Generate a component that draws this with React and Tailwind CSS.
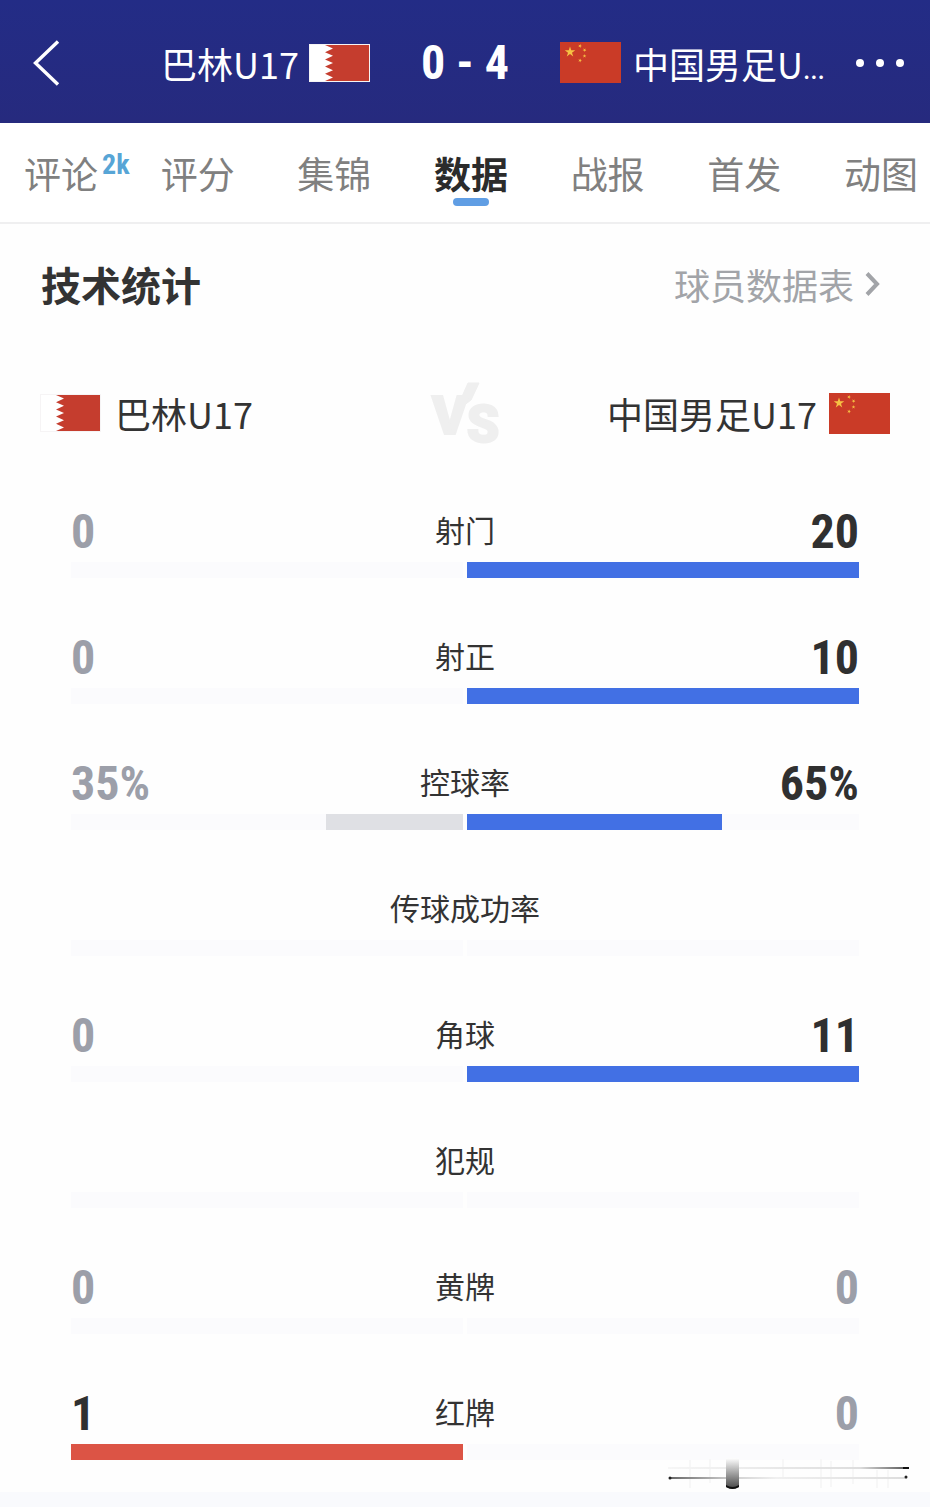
const NUM = "font-['Roboto_Condensed','Liberation_Sans_Narrow',Roboto,sans-serif] font-bold";

const tabs = [
  { label: "评论", badge: "2k" },
  { label: "评分" },
  { label: "集锦" },
  { label: "数据", active: true },
  { label: "战报" },
  { label: "首发" },
  { label: "动图" },
];

const stats = [
  { label: "射门", home: "0", away: "20", homePct: 0, awayPct: 100 },
  { label: "射正", home: "0", away: "10", homePct: 0, awayPct: 100 },
  { label: "控球率", home: "35%", away: "65%", homePct: 35, awayPct: 65 },
  { label: "传球成功率", home: "", away: "", homePct: 0, awayPct: 0 },
  { label: "角球", home: "0", away: "11", homePct: 0, awayPct: 100 },
  { label: "犯规", home: "", away: "", homePct: 0, awayPct: 0 },
  { label: "黄牌", home: "0", away: "0", homePct: 0, awayPct: 0 },
  { label: "红牌", home: "1", away: "0", homePct: 100, awayPct: 0, alert: true },
];

function BahrainFlag({ className }) {
  return (
    <svg viewBox="0 0 61 38" className={className} role="img" aria-label="巴林">
      <rect width="61" height="38" fill="#f6f4f5" />
      <rect x="1" y="1" width="59" height="36" fill="#fff" />
      <path
        d="M60 1H16l8 3.6-8 3.6 8 3.6-8 3.6 8 3.6-8 3.6 8 3.6-8 3.6 8 3.6-8 3.6H60z"
        fill="#c53d2e"
      />
    </svg>
  );
}

function Star({ x, y, r, rotate = 0 }) {
  return (
    <path
      transform={`translate(${x} ${y}) rotate(${rotate}) scale(${r})`}
      d="M0-1 .225-.31.951-.309.363.118.588.809 0 .382-.588.809-.363.118-.951-.309-.225-.31z"
      fill="#f6c244"
    />
  );
}

function ChinaFlag({ className }) {
  return (
    <svg viewBox="0 0 61 41" className={className} role="img" aria-label="中国">
      <rect width="61" height="41" fill="#ca3b27" />
      <Star x={10} y={10} r={5.5} />
      <Star x={20} y={4} r={2} rotate={20} />
      <Star x={24.5} y={8} r={2} rotate={40} />
      <Star x={24.5} y={14} r={2} />
      <Star x={20} y={18.5} r={2} rotate={20} />
    </svg>
  );
}

function Header() {
  return (
    <header className="grid h-[123px] grid-cols-[1fr_190px_1fr] items-center bg-linear-to-b from-[#232c86] to-[#262a7e] pt-0.5 text-white">
      <div className="flex items-center justify-between pl-8">
        <button type="button" aria-label="返回">
          <svg viewBox="0 0 28 46" className="h-[46px] w-7" fill="none" stroke="currentColor" strokeWidth="3.4">
            <path d="M26 1.5 3.5 23 26 44.5" />
          </svg>
        </button>
        <div className="flex items-center gap-2.5">
          <span className="text-[36px] leading-[48px]">巴林U17</span>
          <BahrainFlag className="h-[38px] w-[61px]" />
        </div>
      </div>
      <p className={`${NUM} text-center text-[48px] leading-[52px]`}>0 - 4</p>
      <div className="flex items-center justify-between pr-6">
        <div className="flex items-center gap-3">
          <ChinaFlag className="h-[41px] w-[61px]" />
          <span className="text-[36px] leading-[48px] whitespace-nowrap">
            中国男足U<span className="text-[26px] leading-none">...</span>
          </span>
        </div>
        <button type="button" aria-label="更多">
          <svg viewBox="0 0 52 10" className="h-2.5 w-[52px]" fill="currentColor">
            <circle cx="6" cy="5" r="4" />
            <circle cx="26" cy="5" r="4" />
            <circle cx="46" cy="5" r="4" />
          </svg>
        </button>
      </div>
    </header>
  );
}

function Tabs() {
  return (
    <nav className="flex h-[101px] justify-between border-b-2 border-[#efeff0] bg-white pt-6 pr-3 pl-6">
      {tabs.map((tab) => (
        <a
          key={tab.label}
          href="#"
          className={`relative flex flex-col items-center text-[37px] leading-[52px] ${
            tab.active ? "font-bold text-[#2b2b2b]" : "text-[#808080]"
          }`}
        >
          {tab.label}
          {tab.badge && (
            <sup className={`${NUM} absolute top-0 left-full ml-1 text-[28px] leading-9 text-[#57a5d6]`}>
              {tab.badge}
            </sup>
          )}
          {tab.active && <span className="absolute top-[51px] h-2 w-9 rounded-full bg-[#609ee4]" />}
        </a>
      ))}
    </nav>
  );
}

function VersusMark() {
  return (
    <svg
      viewBox="0 0 68 62"
      className="h-[62px] w-[68px] overflow-visible"
      fill="#efefef"
      stroke="#efefef"
      role="img"
      aria-label="VS"
    >
      <path d="M37 1H48L40 18 32 24 21 51H15z" />
      <text y="52" fontFamily="Roboto" fontWeight="900" strokeWidth="2">
        <tspan x="1" fontSize="54">V</tspan>
        <tspan dx="-1" dy="8" fontSize="52">S</tspan>
      </text>
    </svg>
  );
}

function StatRow({ stat }) {
  const tone = (mine, other) => (mine > other ? "text-[#303030]" : "text-[#9c9fa9]");
  return (
    <li className="flex flex-col gap-[5px]">
      <div className="grid h-[52px] grid-cols-[1fr_auto_1fr] items-start">
        <span className={`${NUM} text-[48px] leading-[54px] ${tone(stat.homePct, stat.awayPct)}`}>{stat.home}</span>
        <span className="text-[30px] leading-[48px] text-[#333]">{stat.label}</span>
        <span className={`${NUM} text-right text-[48px] leading-[54px] ${tone(stat.awayPct, stat.homePct)}`}>
          {stat.away}
        </span>
      </div>
      <div className="grid grid-cols-2 gap-1">
        <div className="flex h-4 justify-end bg-[#fbfbfd]">
          <div className={stat.alert ? "bg-[#dc5445]" : "bg-[#dfe0e4]"} style={{ width: `${stat.homePct}%` }} />
        </div>
        <div className="flex h-4 bg-[#fbfbfd]">
          <div className="bg-[#4270e4]" style={{ width: `${stat.awayPct}%` }} />
        </div>
      </div>
    </li>
  );
}

function ScrollMark() {
  return (
    <svg viewBox="0 0 242 32" className="absolute right-5 bottom-0.5 h-8 w-[242px]" aria-hidden="true">
      <defs>
        <linearGradient id="knob" x1="0" y1="0" x2="0" y2="1">
          <stop offset="0" stopColor="#fff" />
          <stop offset="0.5" stopColor="#a0a0a0" />
          <stop offset="1" stopColor="#444" />
        </linearGradient>
        <linearGradient id="upper" x1="0" x2="1">
          <stop offset="0" stopColor="#f6f6f6" />
          <stop offset="0.8" stopColor="#ddd" />
          <stop offset="1" stopColor="#555" />
        </linearGradient>
        <linearGradient id="lower" x1="0" x2="1">
          <stop offset="0" stopColor="#666" />
          <stop offset="0.25" stopColor="#ccc" />
          <stop offset="0.45" stopColor="#f0f0f0" />
          <stop offset="1" stopColor="#ddd" />
        </linearGradient>
      </defs>
      <path
        d="M22 2v28M42 1v24M115 1v20M153 1v29M163 3v26M185 2v24M209 12v18M220 12v18"
        stroke="#f7f7f7"
        strokeWidth="2"
      />
      <rect x="0" y="9" width="240" height="2" fill="url(#upper)" />
      <rect x="1" y="19" width="238" height="2" fill="url(#lower)" />
      <rect x="235" y="9" width="6" height="2" fill="#111" />
      <circle cx="2" cy="20" r="1.5" fill="#222" />
      <circle cx="238" cy="19" r="1.5" fill="#222" />
      <path d="M58 0H71V29Q64.500 33 58 29z" fill="url(#knob)" />
      <path d="M58 29Q64.500 33 71 29V27Q64.500 31 58 27z" fill="#111" />
    </svg>
  );
}

export default function App() {
  return (
    <div
      lang="zh-CN"
      className="min-h-screen overflow-x-hidden bg-[#f9fafd] font-['Noto_Sans_CJK_SC',sans-serif] text-[#333]"
    >
      <Header />
      <Tabs />
      <main className="relative bg-[#fefefe] pt-8 pb-8">
        <div className="flex items-center justify-between pr-[50px] pl-[41px]">
          <h1 className="text-[40px] leading-[56px] font-bold">技术统计</h1>
          <a href="#" className="flex items-center gap-2.5 text-[36px] leading-[56px] text-[#a2a4a8]">
            球员数据表
            <svg viewBox="0 0 16 26" className="h-[26px] w-4" fill="none" stroke="currentColor" strokeWidth="4">
              <path d="M3 2.500 13 13 3 23.500" />
            </svg>
          </a>
        </div>

        <div className="mt-[70px] grid grid-cols-[1fr_auto_1fr] items-center px-10">
          <div className="flex items-center gap-3.5">
            <BahrainFlag className="h-[38px] w-[61px]" />
            <span className="text-[36px] leading-[48px]">巴林U17</span>
          </div>
          <VersusMark />
          <div className="flex items-center justify-end gap-3">
            <span className="text-[36px] leading-[48px]">中国男足U17</span>
            <ChinaFlag className="h-[41px] w-[61px]" />
          </div>
        </div>

        <ul className="mt-[61px] flex flex-col gap-[53px] px-[71px]">
          {stats.map((stat) => (
            <StatRow key={stat.label} stat={stat} />
          ))}
        </ul>
        <ScrollMark />
      </main>
    </div>
  );
}
